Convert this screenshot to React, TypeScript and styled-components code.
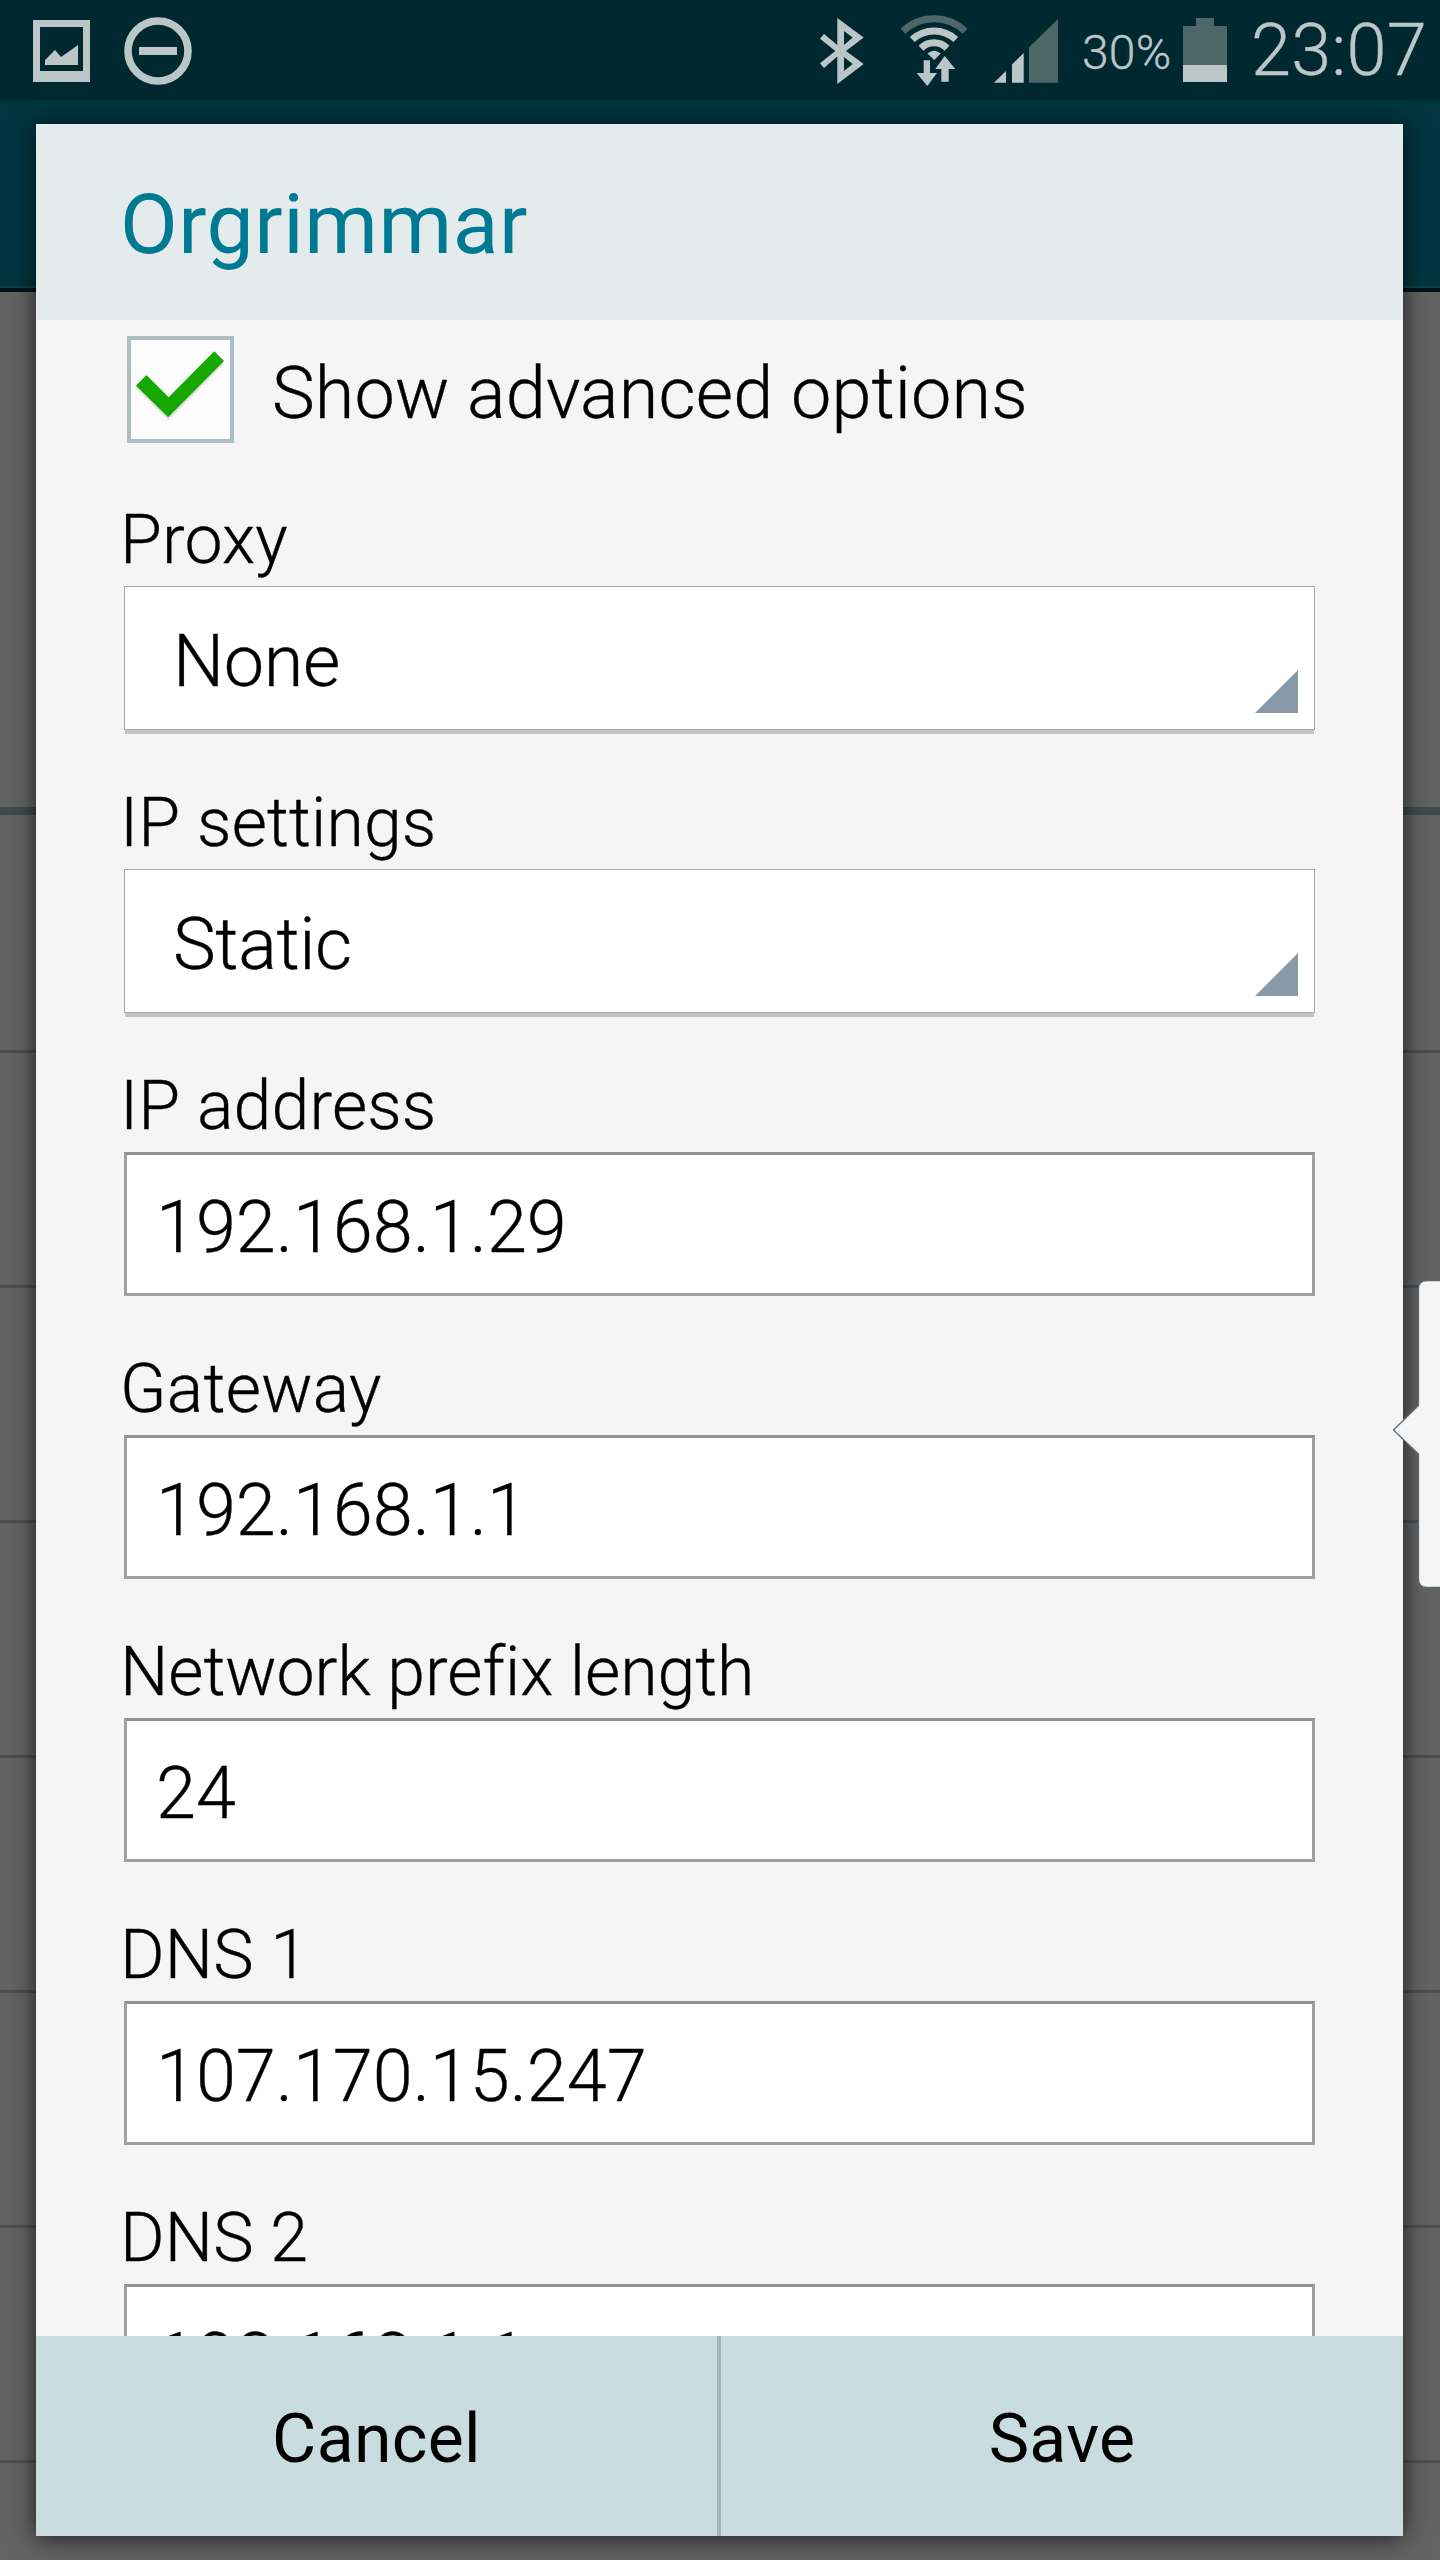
import React from "react";
import styled, { createGlobalStyle } from "styled-components";

const Global = createGlobalStyle`
  * { box-sizing: border-box; }
  body { margin: 0; background: #636363; font-family: Roboto, "Noto Sans", sans-serif; font-weight: 300; color: #000; }
`;

const Screen = styled.div`
  position: relative;
  width: 1440px;
  height: 2560px;
  overflow: hidden;
  background: #636363;
`;

const StatusBar = styled.header`
  height: 100px;
  display: flex;
  align-items: center;
  justify-content: space-between;
  background: #00292f;
  color: #bbc6c9;
`;

const StatusGroup = styled.div`
  display: flex;
  height: 100px;
`;

const StatusText = styled.span<{ $size: number; $width: number; $drop: number; $line: number }>`
  width: ${(p) => p.$width}px;
  padding-top: ${(p) => p.$drop}px;
  font-size: ${(p) => p.$size}px;
  line-height: ${(p) => p.$line}px;
  letter-spacing: 0.2px;
  white-space: nowrap;
  -webkit-text-stroke: 0.35px currentColor;
`;

const ActionBar = styled.div`
  height: 192px;
  background: #003640;
  border-bottom: 4px solid #00161c;
  box-shadow: inset 0 -2px 0 #143e45;
`;

const ListHeader = styled.div`
  height: 523px;
  border-bottom: 8px solid #3e4b4d;
`;

const ListRow = styled.div<{ $height: number }>`
  height: ${(p) => p.$height}px;
  border-bottom: 3px solid #4b4f53;
`;

const Dialog = styled.section`
  position: absolute;
  left: 36px;
  top: 124px;
  width: 1367px;
  height: 2412px;
  display: flex;
  flex-direction: column;
  background: #f5f5f5;
  box-shadow: 0 2px 24px rgba(0, 0, 0, 0.7);
`;

const Title = styled.h1`
  flex: none;
  height: 196px;
  margin: 0;
  padding: 51px 0 0 84px;
  background: #e3ebec;
  color: #007a92;
  font-size: 84px;
  line-height: 99px;
  font-weight: 400;
  letter-spacing: 0.55px;
`;

const Form = styled.div`
  flex: 1;
  min-height: 0;
  overflow: hidden;
  padding: 0 88px;
  -webkit-text-stroke: 0.35px currentColor;
`;

const CheckRow = styled.label`
  display: flex;
  height: 127px;
  padding: 16px 0 0 3px;
`;

const CheckBox = styled.span`
  width: 107px;
  height: 107px;
  border: 4px solid #adbdc2;
  background: #fcfcfc;
`;

const CheckLabel = styled.span`
  padding: 15px 0 0 38px;
  font-size: 72px;
  line-height: 85px;
  letter-spacing: 0.12px;
  white-space: nowrap;
`;

const Field = styled.div`
  height: 283px;
  padding-top: 53px;
`;

const FieldLabel = styled.div<{ $spacing?: number }>`
  height: 86px;
  margin-left: -4px;
  font-size: 68px;
  line-height: 80px;
  letter-spacing: ${(p) => p.$spacing ?? 0.15}px;
`;

const Select = styled.div`
  height: 144px;
  display: flex;
  justify-content: space-between;
  padding: 32px 16px 16px 48px;
  border: 1px solid #a9a9a9;
  background: #fff;
  box-shadow: 0 5px 0 -1px #c3c3c3;
  font-size: 72px;
  line-height: 85px;
  letter-spacing: -0.35px;
`;

const CornerMark = styled.svg`
  align-self: flex-end;
`;

const Input = styled.div`
  height: 144px;
  padding: 30px 0 0 29px;
  border: 3px solid #a0a0a0;
  border-top-color: #919191;
  background: #fff;
  font-size: 72px;
  line-height: 85px;
  letter-spacing: -0.03px;
`;

const Actions = styled.footer`
  flex: none;
  height: 200px;
  display: flex;
  background: #c9dce0;
`;

const Action = styled.button<{ $width: number }>`
  width: ${(p) => p.$width}px;
  padding: 6px 0 0;
  border: 0;
  background: none;
  color: #000;
  font: 400 68px/80px Roboto, sans-serif;
  letter-spacing: 0.3px;
`;

const Divider = styled.i`
  width: 4px;
  background: #a2b7bb;
`;

const EdgeHandle = styled.svg`
  position: absolute;
  left: 1390px;
  top: 1278px;
`;

const fields = [
  { label: "IP address", value: "192.168.1.29" },
  { label: "Gateway", value: "192.168.1.1", spacing: 0.3 },
  { label: "Network prefix length", value: "24", spacing: -0.03 },
  { label: "DNS 1", value: "107.170.15.247" },
  { label: "DNS 2", value: "192.168.1.1" },
];

const selects = [
  { label: "Proxy", value: "None" },
  { label: "IP settings", value: "Static" },
];

export default function App() {
  return (
    <Screen>
      <Global />
      <StatusBar>
        <StatusGroup>
          <svg width="240" height="100" fill="#bbc6c9">
            <path fillRule="evenodd" d="M33 20H90V82H33ZM40 27V71H83V27Z" />
            <path d="M45 60L55 50L61 57L78 45V65H45Z" />
            <circle cx="158" cy="51" r="30" fill="none" stroke="#bbc6c9" strokeWidth="7.6" />
            <rect x="139" y="47" width="38" height="8" />
          </svg>
        </StatusGroup>
        <StatusGroup>
          <svg width="272" height="100" viewBox="810 0 272 100" fill="#bbc6c9">
            <path
              fillRule="evenodd"
              d="M837.300 18L863.700 37.500L846 51L863.700 64L837.300 84V56.500L824 68L820 63.300L835.300 51L820 38.700L824 34L837.300 45ZM844 31V45L852.700 37.500ZM844 57V71L852.700 64Z"
            />
            <g fill="none" stroke="#bbc6c9" strokeWidth="7">
              <path d="M903 31.300A44.700 44.700 0 0 1 965 31.300" stroke="#4d6769" />
              <path d="M912.200 39.500A31.900 31.900 0 0 1 955.800 39.500" />
              <path d="M921 48.200A18.300 18.300 0 0 1 947 48.200" />
            </g>
            <path d="M927.500 53.500Q934 48 940.700 53.500L934.200 60Z" />
            <path d="M923.700 60.300H930V73H937L927.300 86L916.700 73H923.700ZM941.300 81.700V69H935.300L944.700 56L955.300 69H948.700V81.700Z" />
            <path d="M994 82.700L1006 71V82.700ZM1012 82.700V64.500L1023.700 53V82.700Z" />
            <path d="M1029 82.700V47.300L1058 19V82.700Z" fill="#4d6769" />
          </svg>
          <StatusText $size={48} $line={57} $width={100} $drop={24}>30%</StatusText>
          <svg width="69" height="100" viewBox="1182 0 69 100">
            <path d="M1183 26H1196V18H1214V26H1227V65H1183Z" fill="#4d6769" />
            <path d="M1183 65H1227V82H1183Z" fill="#bbc6c9" />
          </svg>
          <StatusText $size={72} $line={85} $width={189} $drop={8}>23:07</StatusText>
        </StatusGroup>
      </StatusBar>
      <ActionBar />
      <ListHeader />
      <ListRow $height={238} />
      {[0, 1, 2, 3, 4, 5].map((row) => (
        <ListRow key={row} $height={235} />
      ))}
      <Dialog>
        <Title>Orgrimmar</Title>
        <Form>
          <CheckRow>
            <CheckBox>
              <svg width="99" height="99" viewBox="131 340 99 99">
                <path d="M136 388L146.400 377L168.600 399.300L214.300 354L224 364L168.200 420.500Z" fill="#e2e2e2" />
                <path d="M136 385.700L146.400 375L168.600 397.300L214.300 351.300L224 361L168.200 417.300Z" fill="#14a800" />
              </svg>
            </CheckBox>
            <CheckLabel>Show advanced options</CheckLabel>
          </CheckRow>
          {selects.map((s) => (
            <Field key={s.label}>
              <FieldLabel>{s.label}</FieldLabel>
              <Select>
                {s.value}
                <CornerMark width="43" height="43" viewBox="0 0 43 43">
                  <path d="M43 0V43H0Z" fill="#8899aa" />
                </CornerMark>
              </Select>
            </Field>
          ))}
          {fields.map((f) => (
            <Field key={f.label}>
              <FieldLabel $spacing={f.spacing}>{f.label}</FieldLabel>
              <Input>{f.value}</Input>
            </Field>
          ))}
        </Form>
        <Actions>
          <Action $width={681}>Cancel</Action>
          <Divider />
          <Action $width={682}>Save</Action>
        </Actions>
      </Dialog>
      <EdgeHandle width="50" height="312" viewBox="1390 1278 50 312">
        <path
          d="M1441 1280.500H1427Q1418.500 1280.500 1418.500 1289V1405.500L1393.500 1430L1418.500 1454V1579Q1418.500 1587.500 1427 1587.500H1441Z"
          fill="#f5f5f5"
          stroke="#5a6b76"
          strokeWidth="1.3"
        />
      </EdgeHandle>
    </Screen>
  );
}
